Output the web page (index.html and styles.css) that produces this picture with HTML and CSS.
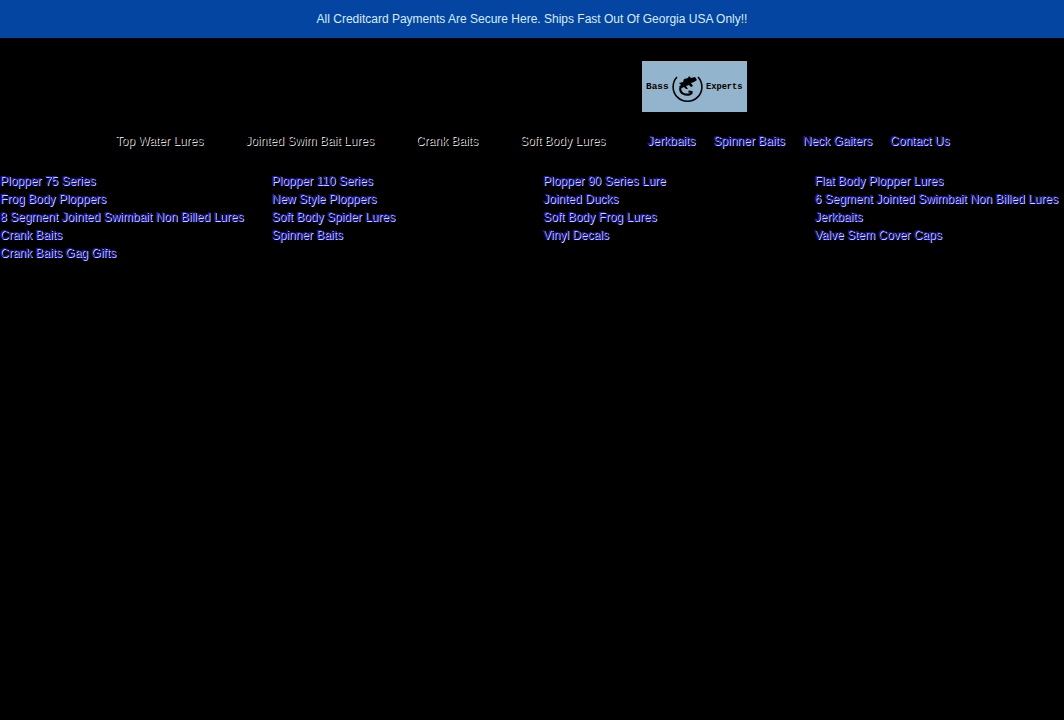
FILE: index.html
```html
<!DOCTYPE html>
<html lang="en">
<head>
    <meta charset="UTF-8">
    <meta name="viewport" content="width=device-width, initial-scale=1.0">
    <title>Bass Experts</title>
    <link rel="stylesheet" href="styles.css">
</head>
<body>
    <div class="announcement">All Creditcard Payments Are Secure Here. Ships Fast Out Of Georgia USA Only!!</div>

    <header class="header">
        <a href="#" class="logo">
            <span class="logo-left">Bass</span>
            <svg class="logo-mark" viewBox="0 0 32 32" width="32" height="32">
                <path d="M6 6A14.4 14.4 0 1 0 27 6" fill="none" stroke="#000" stroke-width="1.6"/>
                <path d="M8 12L12 11L13 8L17 7L18 5L20 7L24 6L26 9L23 11L20 12L22 15L20 16L18 14L15 15L17 18L15 18L13 16L11 17L8 16L10 14Z" fill="#000"/>
                <path d="M10 15C8 19 10 23 14 23.5C18 24 21 23 20.5 21L17.5 20.5" fill="none" stroke="#000" stroke-width="2.2"/>
            </svg>
            <span class="logo-right">Experts</span>
        </a>
    </header>

    <nav class="nav">
        <span class="nav-item dropdown">Top Water Lures</span>
        <span class="nav-item dropdown">Jointed Swim Bait Lures</span>
        <span class="nav-item dropdown">Crank Baits</span>
        <span class="nav-item dropdown">Soft Body Lures</span>
        <a class="nav-item" href="#">Jerkbaits</a>
        <a class="nav-item" href="#">Spinner Baits</a>
        <a class="nav-item" href="#">Neck Gaiters</a>
        <a class="nav-item" href="#">Contact Us</a>
    </nav>

    <div class="links">
        <ul>
            <li><a href="#">Plopper 75 Series</a></li>
            <li><a href="#">Frog Body Ploppers</a></li>
            <li><a href="#">8 Segment Jointed Swimbait Non Billed Lures</a></li>
            <li><a href="#">Crank Baits</a></li>
            <li><a href="#">Crank Baits Gag Gifts</a></li>
        </ul>
        <ul>
            <li><a href="#">Plopper 110 Series</a></li>
            <li><a href="#">New Style Ploppers</a></li>
            <li><a href="#">Soft Body Spider Lures</a></li>
            <li><a href="#">Spinner Baits</a></li>
        </ul>
        <ul>
            <li><a href="#">Plopper 90 Series Lure</a></li>
            <li><a href="#">Jointed Ducks</a></li>
            <li><a href="#">Soft Body Frog Lures</a></li>
            <li><a href="#">Vinyl Decals</a></li>
        </ul>
        <ul>
            <li><a href="#">Flat Body Plopper Lures</a></li>
            <li><a href="#">6 Segment Jointed Swimbait Non Billed Lures</a></li>
            <li><a href="#">Jerkbaits</a></li>
            <li><a href="#">Valve Stem Cover Caps</a></li>
        </ul>
    </div>
</body>
</html>
```
FILE: styles.css
```css
body {
    margin: 0;
    min-height: 100vh;
    background-color: #000;
    font-family: "Liberation Sans", Arial, sans-serif;
    font-size: 12px;
}

a {
    color: #1c1cc4;
    text-decoration: none;
}

.announcement {
    height: 38px;
    line-height: 38px;
    background-color: #0345a0;
    color: #d5edff;
    text-align: center;
}

.header {
    padding: 23px 0 0 642px;
}

.logo {
    display: flex;
    align-items: center;
    box-sizing: border-box;
    width: 105px;
    height: 51px;
    padding-left: 4px;
    background-color: #92b4cd;
    color: #000;
    font-family: "Liberation Mono", monospace;
    font-weight: bold;
}

.logo-left {
    width: 25px;
    font-size: 9.4px;
}

.logo-right {
    margin-left: 3px;
    font-size: 8.7px;
}

.nav {
    display: flex;
    justify-content: center;
    gap: 18px;
    margin-top: 20px;
    padding-left: 1px;
    line-height: 18px;
}

/* black text on black, readable through its shadow */
.nav-item {
    white-space: nowrap;
    text-shadow: 1px 1px #ddd;
}

a.nav-item,
.links a {
    text-shadow: 1px 1px #d4d4ff;
}

.dropdown {
    padding-right: 24px;
}

.links {
    display: grid;
    grid-template-columns: repeat(4, 1fr);
    column-gap: 22px;
    margin-top: 22px;
    line-height: 18px;
}

.links ul {
    margin: 0;
    padding: 0;
    list-style: none;
    white-space: nowrap;
}
```
